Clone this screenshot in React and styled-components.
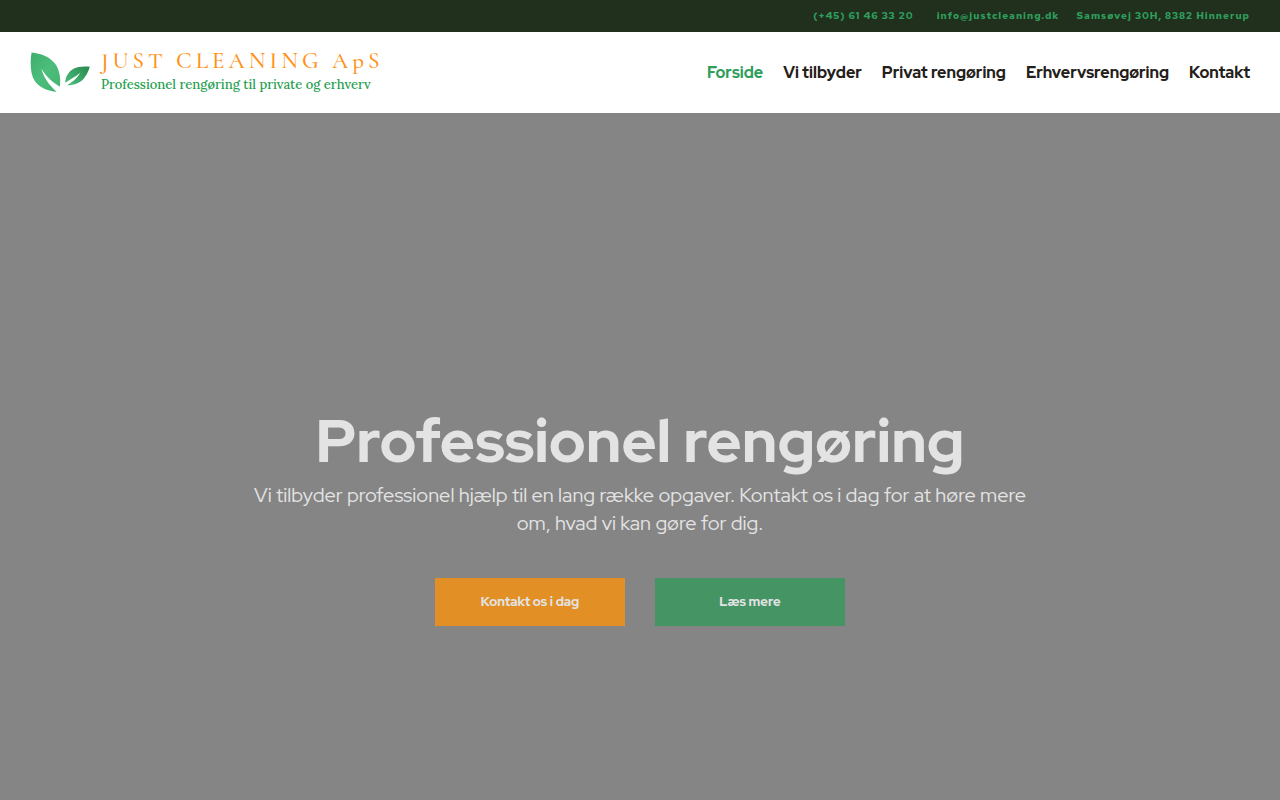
import React from "react";
import styled, { createGlobalStyle } from "styled-components";

const GlobalStyle = createGlobalStyle`
  *, *::before, *::after { box-sizing: border-box; }
  body {
    margin: 0;
    background: #858585;
    font-family: "Red Hat Display", Lato, "Open Sans", sans-serif;
  }
`;

const Page = styled.div`
  min-height: 100vh;
  display: flex;
  flex-direction: column;
`;

const TopBar = styled.address`
  display: flex;
  justify-content: flex-end;
  align-items: center;
  height: 32px;
  padding: 0 30px;
  background: #20301d;
  color: #2f9e5c;
  font-family: "Red Hat Text", "Red Hat Display", Lato, sans-serif;
  font-style: normal;
  font-size: 10px;
  font-weight: 700;
  line-height: 16px;
  letter-spacing: 1px;
  white-space: nowrap;
`;

const ContactLink = styled.a`
  margin-right: ${({ $gap }) => $gap}px;
  color: inherit;
  text-decoration: none;
`;

const Header = styled.header`
  display: flex;
  justify-content: space-between;
  align-items: center;
  padding: 19px 30px 18px;
  background: #fff;
`;

const Brand = styled.a`
  display: flex;
  align-items: center;
  gap: 11px;
  height: 44px;
  text-decoration: none;
  white-space: nowrap;
`;

const BrandText = styled.span`
  display: flex;
  flex-direction: column;
  font-family: "Cormorant Garamond", "Liberation Serif", serif;
`;

const BrandName = styled.span`
  color: #ff9216;
  font-size: 23px;
  font-weight: 500;
  line-height: 24px;
  letter-spacing: 4px;
`;

const Tagline = styled.span`
  color: #1fa150;
  font-family: Lora, "Liberation Serif", serif;
  font-size: 13px;
  font-weight: 500;
  line-height: 24px;
`;

const Nav = styled.nav`
  display: flex;
  gap: 20px;
`;

const NavLink = styled.a`
  color: ${({ $active }) => ($active ? "#2f9e5c" : "#232019")};
  font-size: 16px;
  font-weight: 800;
  line-height: 24px;
  text-decoration: none;
  white-space: nowrap;
`;

const Hero = styled.main`
  flex: 1;
  display: flex;
  flex-direction: column;
  justify-content: center;
  align-items: center;
  padding: 124px 30px 0;
  background: #858585;
  color: #e3e3e3;
  text-align: center;
`;

const Title = styled.h1`
  margin: 0 0 10px;
  font-size: 60px;
  font-weight: 800;
  line-height: 60px;
`;

const Lead = styled.p`
  max-width: 780px;
  margin: 0 0 41px;
  font-size: 20px;
  font-weight: 400;
  line-height: 28px;
`;

const Actions = styled.div`
  display: flex;
  flex-wrap: wrap;
  justify-content: center;
  gap: 30px;
`;

const Button = styled.button`
  width: 190px;
  height: 48px;
  border: 0;
  background: ${({ $color }) => $color};
  color: #e3e3e3;
  font: inherit;
  font-size: 13px;
  font-weight: 800;
  line-height: 20px;
  cursor: pointer;
`;

const Leaves = () => (
  <svg width="60" height="42" viewBox="0 0 60 42" aria-hidden="true">
    <defs>
      <linearGradient id="leafLarge" x1="0" y1="0" x2="1" y2="1">
        <stop offset="0" stopColor="#3fae6c" />
        <stop offset="0.5" stopColor="#4dbd7b" />
        <stop offset="1" stopColor="#43b370" />
      </linearGradient>
      <linearGradient id="leafSmall" x1="0" y1="1" x2="1" y2="0">
        <stop offset="0" stopColor="#4cc07c" />
        <stop offset="1" stopColor="#27894c" />
      </linearGradient>
    </defs>
    <path
      fill="url(#leafLarge)"
      d="M1.6 0.6C11 1.8 19 4.5 24.5 11C29.5 17 31 26 29.8 34.8C23 30.5 17 25.5 11.3 16.8C14 26 19 33 26.6 39.8C18.5 39.2 9.5 36 4.8 29C-0.2 21.5 0.2 9 1.6 0.6Z"
    />
    <path
      fill="url(#leafSmall)"
      d="M59.8 14.8C57.5 22 54 28.5 48 31C43.5 33 40 33.2 37 33.2C42.5 30 47 26.5 50.5 20.5C46.5 24 42 26.5 35.2 30.8C35.4 25 38.5 19.5 43.5 16.7C48 14.3 54.5 14 59.8 14.8Z"
    />
  </svg>
);

const navItems = [
  "Forside",
  "Vi tilbyder",
  "Privat rengøring",
  "Erhvervsrengøring",
  "Kontakt",
];

export default function App() {
  return (
    <Page>
      <GlobalStyle />
      <TopBar>
        <ContactLink href="tel:+4561463320" $gap={23}>(+45) 61 46 33 20</ContactLink>
        <ContactLink href="mailto:info@justcleaning.dk" $gap={17}>info@justcleaning.dk</ContactLink>
        <span>Samsøvej 30H, 8382 Hinnerup</span>
      </TopBar>
      <Header>
        <Brand href="#">
          <Leaves />
          <BrandText>
            <BrandName>JUST CLEANING ApS</BrandName>
            <Tagline>Professionel rengøring til private og erhverv</Tagline>
          </BrandText>
        </Brand>
        <Nav aria-label="Hovedmenu">
          {navItems.map((item, index) => (
            <NavLink
              key={item}
              href="#"
              $active={index === 0}
              aria-current={index === 0 ? "page" : undefined}
            >
              {item}
            </NavLink>
          ))}
        </Nav>
      </Header>
      <Hero>
        <Title>Professionel rengøring</Title>
        <Lead>
          Vi tilbyder professionel hjælp til en lang række opgaver. Kontakt os i
          dag for at høre mere om, hvad vi kan gøre for dig.
        </Lead>
        <Actions>
          <Button $color="#e29026">Kontakt os i dag</Button>
          <Button $color="#459464">Læs mere</Button>
        </Actions>
      </Hero>
    </Page>
  );
}
